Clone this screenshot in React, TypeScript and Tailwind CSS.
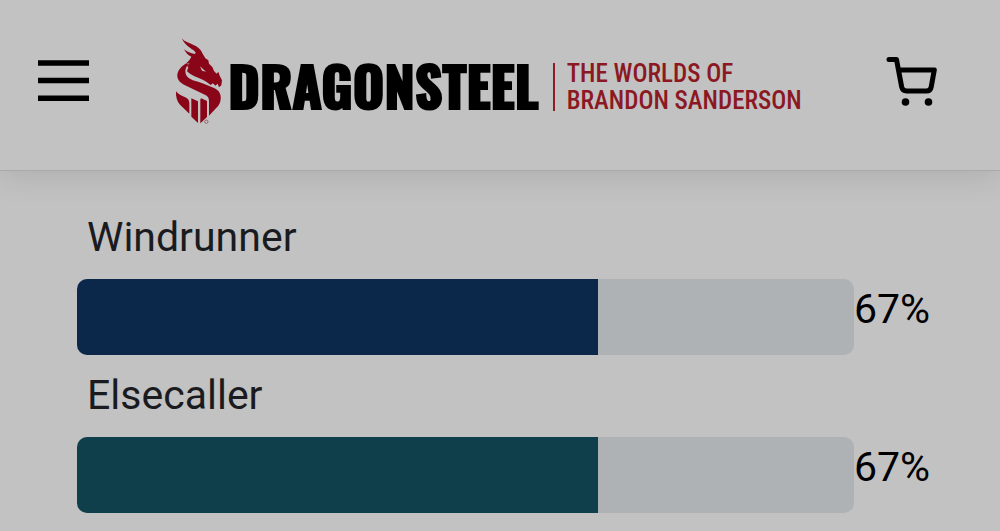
const orders = [
  { name: 'Windrunner', percent: 67, color: 'bg-[#0b274a]' },
  { name: 'Elsecaller', percent: 67, color: 'bg-[#0f3f4b]' },
];

function DragonMark() {
  return (
    <svg viewBox="0 0 189 300" className="h-[100px] w-[63px] shrink-0" aria-hidden="true">
      <g fill="#8a0518">
        <path d="M50 22C58 32 72 36 84 41C98 46 107 54 113 68L121 82L130 88L132 98L142 108L147 120L155 128L160 122L164 134L171 148L169 163L162 169L158 158L151 164L144 157L137 162L124 152C111 143 92 139 76 129L66 121L70 108L65 105L74 97L62 99C70 91 77 83 79 77C70 74 63 66 57 55C67 63 76 66 90 69L92 65C86 54 64 50 50 22Z" />
        <path d="M61 98C49 107 38 117 37 132C36 145 44 154 57 161L121 192C129 196 132 202 132 210V254L160 224C166 216 168 206 167 195C165 184 159 177 149 172L116 158C95 149 68 148 62 128C59 118 63 108 70 100Z" />
        <path d="M33 181C40 190 50 194 59 198C68 202 73 207 73 216V248L45 221C36 211 32 198 33 181Z" />
        <path d="M79 202L99 211V276L79 257Z" />
        <path d="M106 207C106 203 108 201 112 203L126 210V258L106 277Z" />
      </g>
      <path d="M105 106L123 122L111 119Z" fill="#c2c2c2" />
      <circle cx="124" cy="272" r="5" fill="none" stroke="#8b3b43" strokeWidth="2" />
    </svg>
  );
}

function MenuIcon() {
  return (
    <svg viewBox="0 0 51 42" className="h-[42px] w-[51px]" fill="none" stroke="#000" strokeWidth="5.4" aria-hidden="true">
      <path d="M0 3H51M0 20.5H51M0 38.3H51" />
    </svg>
  );
}

function CartIcon() {
  return (
    <svg viewBox="0 0 52 50" className="h-[50px] w-[52px]" fill="none" stroke="#000" strokeWidth="5" strokeLinecap="round" strokeLinejoin="round" aria-hidden="true">
      <path d="M3 3.500H10.500L15.700 31Q16.600 35 20.500 35H40.500Q44.500 35 45.200 31L48.300 14H13" />
      <circle cx="19.500" cy="46" r="3.800" fill="#000" stroke="none" />
      <circle cx="42.500" cy="46" r="3.800" fill="#000" stroke="none" />
    </svg>
  );
}

function Progress({ name, percent, color }: { name: string; percent: number; color: string }) {
  return (
    <section className="pt-2.5">
      <h2 className="pl-2.5 text-[41px] leading-[60px] text-[#191b1f]">{name}</h2>
      <div className="mt-3 flex">
        <div
          role="progressbar"
          aria-label={name}
          aria-valuenow={percent}
          aria-valuemin={0}
          aria-valuemax={100}
          className="h-[76px] flex-1 overflow-hidden rounded-[10px] bg-[#aeb2b5]"
        >
          <div className={`h-full ${color}`} style={{ width: `${percent}%` }} />
        </div>
        <span className="w-[77px] text-[41px] leading-[60px] text-black">{percent}%</span>
      </div>
    </section>
  );
}

export default function App() {
  return (
    <div className="min-h-screen bg-[#c2c2c2] font-['Roboto',sans-serif]">
      <header className="flex h-[171px] items-center border-b border-[#aaaaaa] pr-[62px] pb-2 pl-[38px] shadow-[0_2px_32px_rgba(0,0,0,0.12)]">
        <button type="button" aria-label="Open menu">
          <MenuIcon />
        </button>
        <div className="flex flex-1 justify-center pr-2">
          <a href="#home" className="flex items-center" aria-label="Dragonsteel home">
            <DragonMark />
            <span className="pt-2 font-['Oswald','Roboto_Condensed',sans-serif] text-[54px] leading-none font-bold text-black [-webkit-text-stroke:2px_black]">
              DRAGONSTEEL
            </span>
            <span className="mt-3 ml-3.5 flex h-12 flex-col justify-center border-l-2 border-[#8e1c27] pl-3 font-['Roboto_Condensed',sans-serif] text-[25px] leading-[27px] font-medium whitespace-nowrap text-[#8b1822]">
              <span>THE WORLDS OF</span>
              <span>BRANDON SANDERSON</span>
            </span>
          </a>
        </div>
        <button type="button" aria-label="Shopping cart">
          <CartIcon />
        </button>
      </header>
      <main className="pt-[26px] pr-[69px] pl-[77px]">
        {orders.map((order) => (
          <Progress key={order.name} {...order} />
        ))}
      </main>
    </div>
  );
}
